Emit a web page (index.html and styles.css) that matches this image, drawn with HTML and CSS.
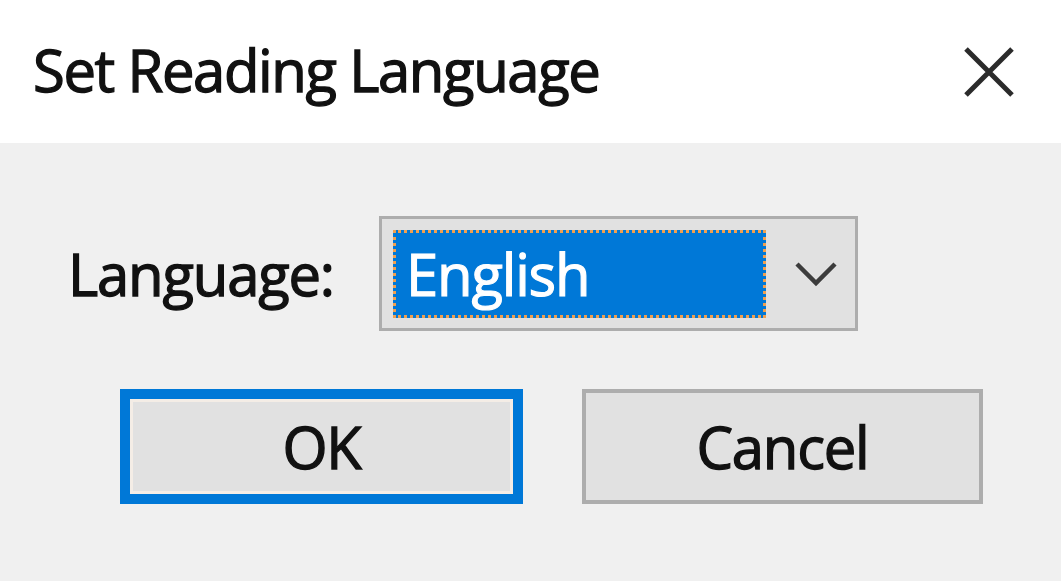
FILE: index.html
```html
<!DOCTYPE html>
<html>
<head>
<meta charset="utf-8">
<link rel="stylesheet" href="styles.css">
</head>
<body>
<div class="dialog">
  <div class="titlebar">
    <span class="title">Set Reading Language</span>
    <svg class="close" width="52" height="52" viewBox="0 0 52 52">
      <path d="M3 3 L49 49 M49 3 L3 49" stroke="#2b2b2b" stroke-width="5" fill="none"/>
    </svg>
  </div>
  <div class="content">
    <div class="row">
      <span class="label">Language:</span>
      <div class="combo">
        <div class="selected"><span class="seltext">English</span></div>
        <svg class="chevron" width="44" height="28" viewBox="0 0 44 28">
          <path d="M3 4 L22 23 L41 4" stroke="#3c3c3c" stroke-width="4.5" fill="none"/>
        </svg>
      </div>
    </div>
    <div class="buttons">
      <div class="btn btn-default">OK</div>
      <div class="btn">Cancel</div>
    </div>
  </div>
</div>
</body>
</html>
```
FILE: styles.css
```css
html, body {
  margin: 0;
  padding: 0;
}
body {
  width: 1061px;
  height: 581px;
  overflow: hidden;
  font-family: "Open Sans", "Noto Sans", sans-serif;
  color: #000;
}
.dialog {
  width: 1061px;
  height: 581px;
  display: flex;
  flex-direction: column;
  background: #f0f0f0;
}
.titlebar {
  height: 143px;
  background: #ffffff;
  display: flex;
  align-items: center;
  justify-content: space-between;
  padding: 0 46px 0 33px;
  flex-shrink: 0;
}
.title {
  font-size: 58px;
  line-height: 1;
  letter-spacing: -1.4px;
  color: #111;
  -webkit-text-stroke: 1.3px #111;
  position: relative;
  top: -2px;
}
.close {
  display: block;
}
.content {
  padding: 73px 0 0 68px;
  display: flex;
  flex-direction: column;
}
.row {
  display: flex;
  align-items: center;
}
.label {
  width: 311px;
  font-size: 58px;
  letter-spacing: -1.2px;
  line-height: 1;
  color: #111;
  -webkit-text-stroke: 1.3px #111;
}
.combo {
  box-sizing: border-box;
  width: 479px;
  height: 115px;
  border: 3px solid #adadad;
  background: #e1e1e1;
  display: flex;
  align-items: center;
  padding-left: 11px;
}
.selected {
  box-sizing: border-box;
  width: 373px;
  height: 88px;
  background: #0078d7;
  border: 3px dotted #f0a050;
  display: flex;
  align-items: center;
  padding-left: 10px;
}
.seltext {
  color: #fff;
  font-size: 58px;
  letter-spacing: -1.2px;
  line-height: 1;
  -webkit-text-stroke: 1.1px #fff;
}
.chevron {
  display: block;
  margin-left: 28px;
}
.buttons {
  display: flex;
  gap: 59px;
  margin-top: 58px;
  padding-left: 52px;
}
.btn {
  box-sizing: border-box;
  width: 401px;
  height: 115px;
  border: 4px solid #adadad;
  background: #e1e1e1;
  display: flex;
  align-items: center;
  justify-content: center;
  font-size: 58px;
  letter-spacing: -1.2px;
  line-height: 1;
  color: #111;
  -webkit-text-stroke: 1.3px #111;
}
.btn-default {
  width: 403px;
  border: 10px solid #0078d7;
  box-shadow: inset 0 0 0 3px #f4ede6;
}
```
